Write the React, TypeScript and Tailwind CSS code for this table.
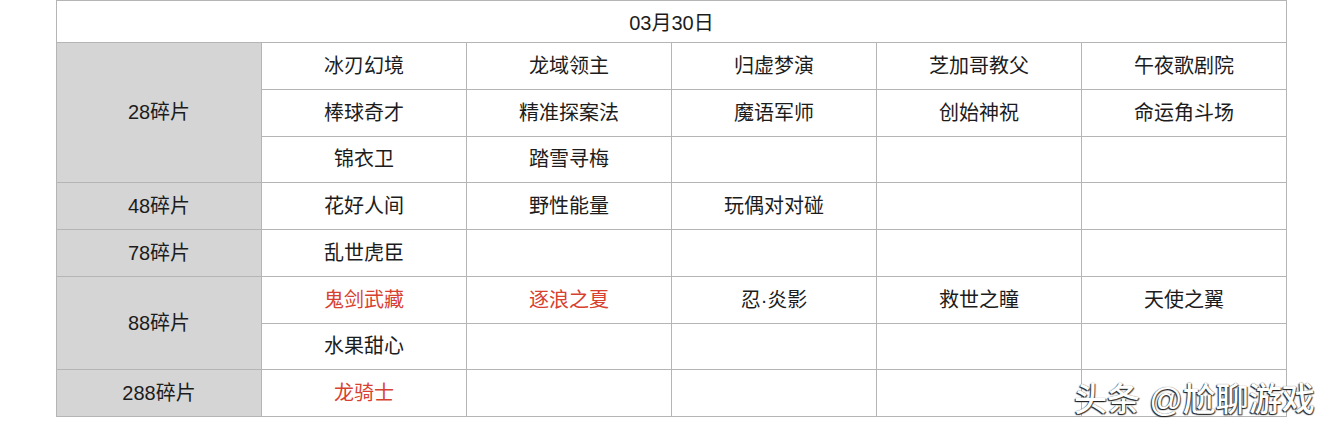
import React from "react";

type Cell = { t: string; red?: boolean };

const groups: { label: string; rows: Cell[][]; heights: number[] }[] = [
  {
    label: "28碎片",
    heights: [47, 47, 46],
    rows: [
      [{ t: "冰刃幻境" }, { t: "龙域领主" }, { t: "归虚梦演" }, { t: "芝加哥教父" }, { t: "午夜歌剧院" }],
      [{ t: "棒球奇才" }, { t: "精准探案法" }, { t: "魔语军师" }, { t: "创始神祝" }, { t: "命运角斗场" }],
      [{ t: "锦衣卫" }, { t: "踏雪寻梅" }, { t: "" }, { t: "" }, { t: "" }],
    ],
  },
  {
    label: "48碎片",
    heights: [47],
    rows: [[{ t: "花好人间" }, { t: "野性能量" }, { t: "玩偶对对碰" }, { t: "" }, { t: "" }]],
  },
  {
    label: "78碎片",
    heights: [47],
    rows: [[{ t: "乱世虎臣" }, { t: "" }, { t: "" }, { t: "" }, { t: "" }]],
  },
  {
    label: "88碎片",
    heights: [47, 46],
    rows: [
      [{ t: "鬼剑武藏", red: true }, { t: "逐浪之夏", red: true }, { t: "忍·炎影" }, { t: "救世之瞳" }, { t: "天使之翼" }],
      [{ t: "水果甜心" }, { t: "" }, { t: "" }, { t: "" }, { t: "" }],
    ],
  },
  {
    label: "288碎片",
    heights: [47],
    rows: [[{ t: "龙骑士", red: true }, { t: "" }, { t: "" }, { t: "" }, { t: "" }]],
  },
];

export default function App() {
  return (
    <div
      className="relative w-[1334px] h-[431px] bg-white overflow-hidden"
      style={{ fontFamily: '"Liberation Sans", "Noto Sans CJK SC", sans-serif' }}
    >
      <div className="pl-[56px]">
        <table className="border-collapse table-fixed w-[1231px] text-[20px] text-[#1c1c1c]">
          <colgroup>
            <col className="w-[205px]" />
            <col className="w-[205px]" />
            <col className="w-[205px]" />
            <col className="w-[205px]" />
            <col className="w-[205px]" />
            <col className="w-[205px]" />
          </colgroup>
          <tbody>
            <tr className="h-[42px]">
              <td colSpan={6} className="border border-[#b5b5b5] text-center p-0 pt-[3px] leading-none">
                03月30日
              </td>
            </tr>
            {groups.map((g) =>
              g.rows.map((row, ri) => (
                <tr key={g.label + ri} style={{ height: g.heights[ri] }}>
                  {ri === 0 && (
                    <td
                      rowSpan={g.rows.length}
                      className="border border-[#b5b5b5] bg-[#d5d5d5] text-center p-0 pb-[1px] leading-none"
                    >
                      {g.label}
                    </td>
                  )}
                  {row.map((c, ci) => (
                    <td
                      key={ci}
                      className={
                        "border border-[#b5b5b5] text-center p-0 pb-[1px] leading-none " +
                        (c.red ? "text-[#d8412f]" : "")
                      }
                    >
                      {c.t}
                    </td>
                  ))}
                </tr>
              ))
            )}
          </tbody>
        </table>
      </div>
      <div className="absolute left-[1074px] top-[383px] text-[33px] font-medium leading-none text-white whitespace-nowrap [text-shadow:-1px_1px_1px_#222,1px_1px_1px_#444,0_0_1px_#666]">
        头条 @尬聊游戏
      </div>
    </div>
  );
}
